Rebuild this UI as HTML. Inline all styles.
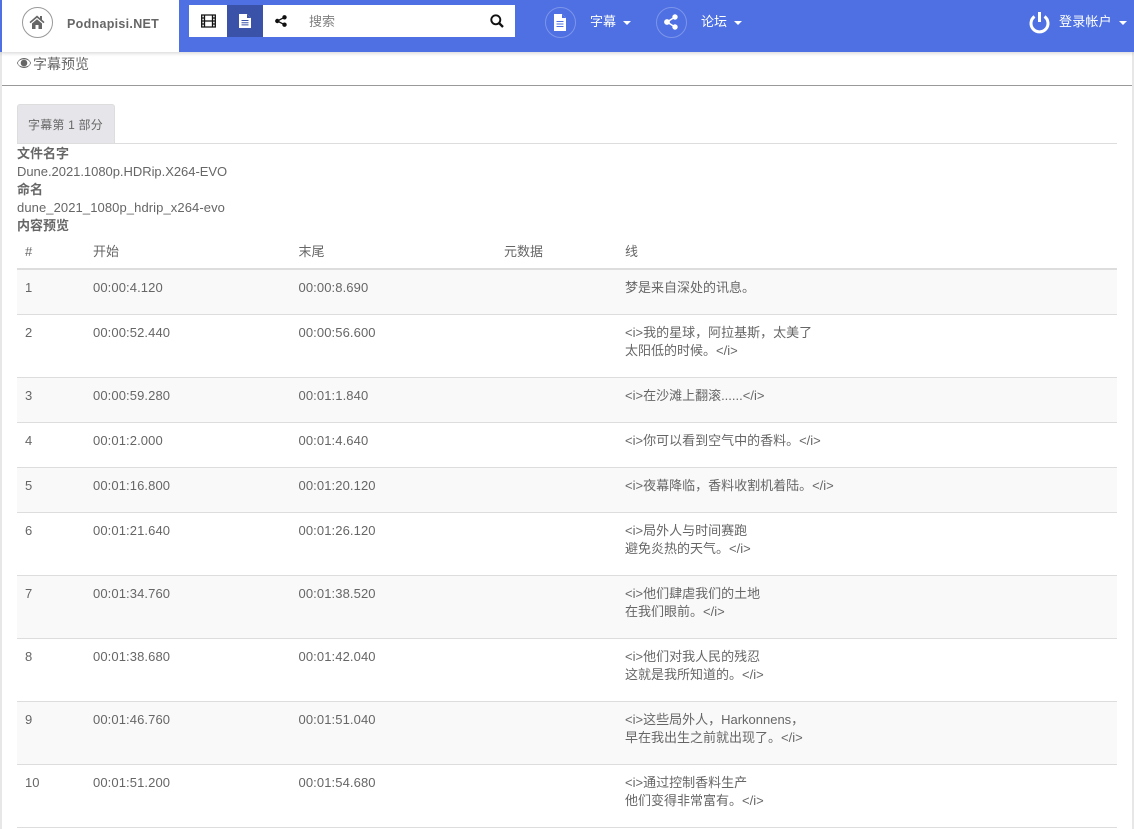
<!DOCTYPE html>
<html lang="zh">
<head>
<meta charset="utf-8">
<title>Podnapisi.NET</title>
<style>
html,body{margin:0;padding:0;width:1134px;height:829px;overflow:hidden;background:#fff}
body{position:relative;font-family:"Liberation Sans","Noto Sans CJK SC",sans-serif;font-size:13px;color:#666}
.a{position:absolute;white-space:nowrap}
.bar{position:absolute;left:0;top:0;width:1134px;height:52px;background:#4e70e2;box-shadow:0 1px 4px rgba(0,0,0,.18);z-index:5}
.r{position:absolute;left:17px;width:1100px;border-bottom:1px solid #ddd}
.r.o{background:#f9f9f9}
.c{position:absolute;white-space:nowrap;line-height:18px;top:9px}
.n{left:8px}.s{left:76px;letter-spacing:.1px}.e{left:281.5px;letter-spacing:.1px}.l{left:608px}
svg{position:absolute;display:block}
.caret{position:absolute;width:0;height:0;border-left:4px solid transparent;border-right:4px solid transparent;border-top:4px solid #fff}
</style>
</head>
<body>
<div class="a" style="left:0;top:52px;width:2px;height:777px;background:#e7e7e7"></div>
<div class="a" style="left:1132px;top:52px;width:2px;height:777px;background:#e7e7e7"></div>

<div class="bar">
  <div class="a" style="left:2px;top:0;width:177px;height:52px;background:#fff"></div>
  <div class="a" style="left:22px;top:7px;width:29px;height:29px;border:1px solid #999;border-radius:50%"></div>
  <svg style="left:29px;top:14px" width="16" height="16" viewBox="0 0 16 16"><path fill="#666" d="M8 1.500 .5 8l1 1.200L8 3.700l6.500 5.500 1-1.200-2.500-2.200V2h-2v2.100zM3 9.500 8 5.200l5 4.300V15H9.500v-4h-3v4H3z"/></svg>
  <div class="a" style="left:67px;top:15px;font-size:12.500px;font-weight:bold;line-height:18px;color:#666;letter-spacing:.3px">Podnapisi.NET</div>

  <div class="a" style="left:189px;top:5px;width:326px;height:32px;background:#fff"></div>
  <div class="a" style="left:227px;top:5px;width:36px;height:32px;background:#3a53a8"></div>
  <svg style="left:201px;top:14px" width="15" height="14" viewBox="0 0 15 14"><path fill="none" stroke="#111" stroke-width="1.300" d="M.7 1h13.600v12H.7zM3.500 1v12M11.500 1v12M3.500 7h8M.7 4h2.800M.7 7h2.800M.7 10h2.800M11.500 4h2.800M11.500 7h2.800M11.500 10h2.800"/></svg>
  <svg style="left:238px;top:14px" width="14" height="14" viewBox="0 0 14 14"><path fill="#fff" d="M1 0h8l4 4v10H1z"/><path fill="#3a53a8" d="M9 0v4h4zM3.500 6h7v1h-7zM3.500 8.200h7v1h-7zM3.500 10.400h7v1h-7z"/></svg>
  <svg style="left:275px;top:15px" width="12" height="12" viewBox="0 0 12 12"><circle cx="9.500" cy="2.300" r="2.200" fill="#111"/><circle cx="9.500" cy="9.700" r="2.200" fill="#111"/><circle cx="2.300" cy="6" r="2.200" fill="#111"/><path fill="none" stroke="#111" stroke-width="1.300" d="M9.500 2.300 2.300 6l7.200 3.700"/></svg>
  <div class="a" style="left:309px;top:13px;font-size:13px;line-height:18px;color:#808080">搜索</div>
  <svg style="left:490px;top:14px" width="14" height="14" viewBox="0 0 14 14"><circle cx="5.800" cy="5.800" r="4.500" fill="none" stroke="#111" stroke-width="1.900"/><path stroke="#111" stroke-width="2.300" d="m9 9 4 4"/></svg>

  <div class="a" style="left:545px;top:7px;width:29px;height:29px;border:1px solid #7d95ea;border-radius:50%"></div>
  <svg style="left:553px;top:14px" width="14" height="17" viewBox="0 0 14 17"><path fill="#fff" d="M1 0h8l4 4v13H1z"/><path fill="#4e70e2" d="M9 0v4h4zM3.500 7h7v1h-7zM3.500 9.500h7v1h-7zM3.500 12h7v1h-7z"/></svg>
  <div class="a" style="left:590px;top:13px;font-size:13px;line-height:18px;color:#fff">字幕</div>
  <div class="caret" style="left:623px;top:21px"></div>

  <div class="a" style="left:656px;top:7px;width:29px;height:29px;border:1px solid #7d95ea;border-radius:50%"></div>
  <svg style="left:664px;top:14px" width="14" height="16" viewBox="0 0 14 16"><circle cx="11" cy="3" r="2.700" fill="#fff"/><circle cx="11" cy="13" r="2.700" fill="#fff"/><circle cx="3" cy="8" r="2.900" fill="#fff"/><path fill="none" stroke="#fff" stroke-width="1.500" d="M11 3 3 8l8 5"/></svg>
  <div class="a" style="left:701px;top:13px;font-size:13px;line-height:18px;color:#fff">论坛</div>
  <div class="caret" style="left:734px;top:21px"></div>

  <svg style="left:1028px;top:10px" width="23" height="24" viewBox="0 0 23 24"><path fill="none" stroke="#fff" stroke-width="3" d="M6.500 6.500a8.500 8.500 0 1 0 10 0"/><path stroke="#fff" stroke-width="3" d="M11.500 2v10"/></svg>
  <div class="a" style="left:1059px;top:13px;font-size:13px;letter-spacing:.2px;line-height:18px;color:#fff">登录帐户</div>
  <div class="caret" style="left:1119px;top:21px"></div>
</div>

<svg style="left:17px;top:58px" width="14" height="10" viewBox="0 0 14 10"><path fill="#666" d="M7 0C3.800 0 1.300 2 0 5c1.300 3 3.800 5 7 5s5.700-2 7-5c-1.300-3-3.800-5-7-5z"/><ellipse cx="7" cy="5" rx="6" ry="3.800" fill="#fff"/><circle cx="7" cy="5" r="3.300" fill="#666"/></svg>
<div class="a" style="left:33px;top:54px;font-size:14px;line-height:20px;color:#666">字幕预览</div>
<div class="a" style="left:2px;top:85px;width:1130px;height:1px;background:#999"></div>

<div class="a" style="left:17px;top:104px;width:96px;height:39px;background:#e6e6ea;border:1px solid #ddd;border-bottom:0;border-radius:3px 3px 0 0"></div>
<div class="a" style="left:28px;top:116px;font-size:12px;line-height:18px;letter-spacing:.2px">字幕第 1 部分</div>
<div class="a" style="left:17px;top:143px;width:1100px;height:1px;background:#ddd"></div>

<div class="a" style="left:17px;top:145px;font-weight:bold;line-height:18px">文件名字</div>
<div class="a" style="left:17px;top:163px;line-height:18px;letter-spacing:-.03px">Dune.2021.1080p.HDRip.X264-EVO</div>
<div class="a" style="left:17px;top:181px;font-weight:bold;line-height:18px">命名</div>
<div class="a" style="left:17px;top:199px;line-height:18px;letter-spacing:.09px">dune_2021_1080p_hdrip_x264-evo</div>
<div class="a" style="left:17px;top:217px;font-weight:bold;line-height:18px">内容预览</div>

<div class="a" style="left:25px;top:243px;line-height:18px">#</div>
<div class="a" style="left:93px;top:243px;line-height:18px">开始</div>
<div class="a" style="left:298.500px;top:243px;line-height:18px">末尾</div>
<div class="a" style="left:504px;top:243px;line-height:18px">元数据</div>
<div class="a" style="left:625px;top:243px;line-height:18px">线</div>
<div class="a" style="left:17px;top:268px;width:1100px;height:2px;background:#ddd"></div>

<div class="r o" style="top:270px;height:44px"><div class="c n">1</div><div class="c s">00:00:4.120</div><div class="c e">00:00:8.690</div><div class="c l">梦是来自深处的讯息。</div></div>
<div class="r" style="top:315px;height:62px"><div class="c n">2</div><div class="c s">00:00:52.440</div><div class="c e">00:00:56.600</div><div class="c l">&lt;i&gt;我的星球，阿拉基斯，太美了<br>太阳低的时候。&lt;/i&gt;</div></div>
<div class="r o" style="top:378px;height:44px"><div class="c n">3</div><div class="c s">00:00:59.280</div><div class="c e">00:01:1.840</div><div class="c l">&lt;i&gt;在沙滩上翻滚......&lt;/i&gt;</div></div>
<div class="r" style="top:423px;height:44px"><div class="c n">4</div><div class="c s">00:01:2.000</div><div class="c e">00:01:4.640</div><div class="c l">&lt;i&gt;你可以看到空气中的香料。&lt;/i&gt;</div></div>
<div class="r o" style="top:468px;height:44px"><div class="c n">5</div><div class="c s">00:01:16.800</div><div class="c e">00:01:20.120</div><div class="c l">&lt;i&gt;夜幕降临，香料收割机着陆。&lt;/i&gt;</div></div>
<div class="r" style="top:513px;height:62px"><div class="c n">6</div><div class="c s">00:01:21.640</div><div class="c e">00:01:26.120</div><div class="c l">&lt;i&gt;局外人与时间赛跑<br>避免炎热的天气。&lt;/i&gt;</div></div>
<div class="r o" style="top:576px;height:62px"><div class="c n">7</div><div class="c s">00:01:34.760</div><div class="c e">00:01:38.520</div><div class="c l">&lt;i&gt;他们肆虐我们的土地<br>在我们眼前。&lt;/i&gt;</div></div>
<div class="r" style="top:639px;height:62px"><div class="c n">8</div><div class="c s">00:01:38.680</div><div class="c e">00:01:42.040</div><div class="c l">&lt;i&gt;他们对我人民的残忍<br>这就是我所知道的。&lt;/i&gt;</div></div>
<div class="r o" style="top:702px;height:62px"><div class="c n">9</div><div class="c s">00:01:46.760</div><div class="c e">00:01:51.040</div><div class="c l">&lt;i&gt;这些局外人，Harkonnens，<br>早在我出生之前就出现了。&lt;/i&gt;</div></div>
<div class="r" style="top:765px;height:62px"><div class="c n">10</div><div class="c s">00:01:51.200</div><div class="c e">00:01:54.680</div><div class="c l">&lt;i&gt;通过控制香料生产<br>他们变得非常富有。&lt;/i&gt;</div></div>
</body>
</html>
